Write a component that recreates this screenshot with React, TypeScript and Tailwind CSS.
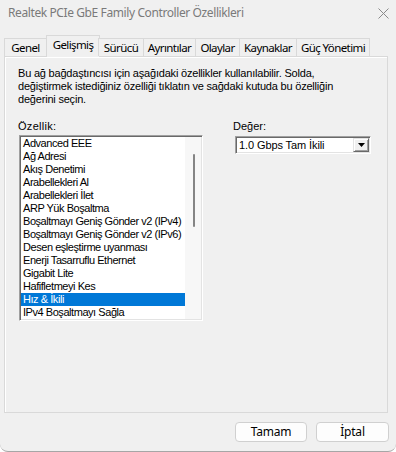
import React from 'react';

const tabs = [
  { label: 'Genel', w: 43 },
  { label: 'Gelişmiş', w: 52, active: true },
  { label: 'Sürücü', w: 46 },
  { label: 'Ayrıntılar', w: 53 },
  { label: 'Olaylar', w: 45 },
  { label: 'Kaynaklar', w: 58 },
  { label: 'Güç Yönetimi', w: 74 },
];

const properties = [
  'Advanced EEE',
  'Ağ Adresi',
  'Akış Denetimi',
  'Arabellekleri Al',
  'Arabellekleri İlet',
  'ARP Yük Boşaltma',
  'Boşaltmayı Geniş Gönder v2 (IPv4)',
  'Boşaltmayı Geniş Gönder v2 (IPv6)',
  'Desen eşleştirme uyanması',
  'Enerji Tasarruflu Ethernet',
  'Gigabit Lite',
  'Hafifletmeyi Kes',
  'Hız & İkili',
  'IPv4 Boşaltmayı Sağla',
];

const segoe = { fontFamily: '"Noto Sans", "Open Sans", sans-serif' };
const msSans = { fontFamily: '"Liberation Sans", Arial, sans-serif' };

export default function App() {
  const selected = 'Hız & İkili';

  return (
    <div className="w-[396px] h-[452px] bg-[#f0f0f0] flex flex-col overflow-hidden rounded-b-[8px] border-b border-[#a6a6a6]">
      {/* title bar */}
      <div className="h-[25px] flex items-center justify-between pl-[8px] pr-[7px]" style={segoe}>
        <span className="text-[12px] text-[#7a7a7a] tracking-[-0.4px]">Realtek PCIe GbE Family Controller Özellikleri</span>
        <svg width="11" height="11" viewBox="0 0 11 11" className="mt-[1px]">
          <path d="M0.5 0.5 L10.5 10.5 M10.5 0.5 L0.5 10.5" stroke="#8a8a8a" strokeWidth="1" />
        </svg>
      </div>

      {/* tabs */}
      <div className="h-[31px] flex items-end pl-[4px] relative z-10" style={segoe}>
        {tabs.map((t) =>
          t.active ? (
            <div
              key={t.label}
              style={{ width: t.w + 2 }}
              className="shrink-0 h-[22px] -mx-[1px] -mb-[1px] border border-b-0 border-[#d9d9d9] bg-[#f0f0f0] flex items-center justify-center text-[11.5px] text-black pb-[3px] tracking-[-0.6px] whitespace-nowrap"
            >
              {t.label}
            </div>
          ) : (
            <div
              key={t.label}
              style={{ width: t.w }}
              className="shrink-0 h-[18px] border border-b-0 border-[#d9d9d9] -ml-px first:ml-0 bg-[#f0f0f0] flex items-center justify-center text-[11.5px] text-black tracking-[-0.6px] whitespace-nowrap"
            >
              {t.label}
            </div>
          )
        )}
      </div>

      {/* panel */}
      <div className="mx-[4px] w-[384px] h-[357px] border border-[#d9d9d9] bg-[#f0f0f0] shadow-[inset_1px_1px_0_#ffffff]" style={msSans}>
        <p className="mt-[10px] ml-[13px] text-[11px] leading-[13px] text-black tracking-[-0.2px]">
          Bu ağ bağdaştıncısı için aşağıdaki özellikler kullanılabilir. Solda,
          <br />
          değiştirmek istediğiniz özelliği tıklatın ve sağdaki kutuda bu özelliğin
          <br />
          değerini seçin.
        </p>

        <div className="flex mt-[14px]">
          {/* left column */}
          <div className="ml-[13px] flex flex-col">
            <span className="text-[11px] leading-[13px] text-black tracking-[0.3px]">Özellik:</span>
            <div className="mt-[2px] ml-[1px] w-[184px] h-[186px] bg-white border border-t-[#a0a0a0] border-l-[#a0a0a0] border-r-[#ffffff] border-b-[#ffffff] shadow-[inset_1px_1px_0_#696969,inset_-1px_-1px_0_#e3e3e3] p-[1px] flex">
              <div className="flex-1 min-w-0 overflow-hidden flex flex-col">
                {properties.map((p) => (
                  <div
                    key={p}
                    className={`h-[13px] leading-[13px] pl-[2px] text-[11px] whitespace-nowrap tracking-[-0.45px] ${
                      p === selected ? 'bg-[#0078d7] text-white' : 'text-black'
                    }`}
                  >
                    {p}
                  </div>
                ))}
              </div>
              <div className="w-[16px] shrink-0 bg-[#f7f7f7] relative">
                <div className="absolute left-[8px] top-[17px] w-[2px] h-[73px] rounded-full bg-[#858585]" />
              </div>
            </div>
          </div>

          {/* right column */}
          <div className="ml-[30px] flex flex-col">
            <span className="text-[11px] leading-[13px] text-black">Değer:</span>
            <div className="mt-[3px] ml-[2px] w-[136px] h-[18px] bg-white border border-t-[#a0a0a0] border-l-[#a0a0a0] border-r-[#ffffff] border-b-[#ffffff] shadow-[inset_1px_1px_0_#696969,inset_-1px_-1px_0_#e3e3e3] flex items-stretch p-[1px]">
              <span className="flex-1 pl-[2px] text-[11px] leading-[14px] text-black whitespace-nowrap tracking-[-0.1px]">1.0 Gbps Tam İkili</span>
              <div className="w-[16px] bg-[#f0f0f0] border border-t-[#e3e3e3] border-l-[#e3e3e3] border-r-[#696969] border-b-[#696969] shadow-[inset_1px_1px_0_#ffffff,inset_-1px_-1px_0_#a0a0a0] flex items-center justify-center">
                <svg width="7" height="4" viewBox="0 0 7 4">
                  <path d="M0 0 H7 L3.5 4 Z" fill="#000000" />
                </svg>
              </div>
            </div>
          </div>
        </div>
      </div>

      {/* buttons */}
      <div className="flex justify-end gap-[9px] pr-[7px] mt-[9px]" style={segoe}>
        <button className="w-[72px] h-[20px] rounded-[4px] border border-[#d0d0d0] bg-[#fdfdfd] text-[12px] leading-[18px] text-black tracking-[-0.2px]">
          Tamam
        </button>
        <button className="w-[73px] h-[20px] rounded-[4px] border border-[#d0d0d0] bg-[#fdfdfd] text-[12px] leading-[18px] text-black tracking-[-0.2px]">
          İptal
        </button>
      </div>
    </div>
  );
}
